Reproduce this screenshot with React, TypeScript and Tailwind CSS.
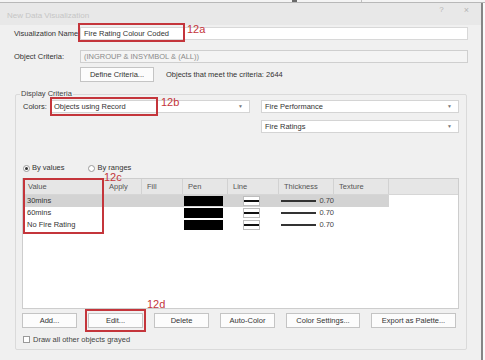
// New Data Visualization dialog, with the red numbered call-outs from the manual.

import React from "react";

const font = "font-['Liberation_Sans',Arial,sans-serif]";

type Row = { value: string; selected?: boolean };

const rows: Row[] = [
  { value: "30mins", selected: true },
  { value: "60mins" },
  { value: "No Fire Rating" },
];

const columns = [
  { label: "Value", w: "w-[81px]" },
  { label: "Apply", w: "w-[38px]" },
  { label: "Fill", w: "w-[41px]" },
  { label: "Pen", w: "w-[45px]" },
  { label: "Line", w: "w-[51px]" },
  { label: "Thickness", w: "w-[55px]" },
  { label: "Texture", w: "w-[55px]" },
];

function Select({ text, className }: { text: string; className: string }) {
  return (
    <div
      className={`h-[13px] bg-white border border-[#d4d4d4] flex items-center pl-[3px] pr-[6px] ${className}`}
    >
      <span className="flex-1 text-[#333]">{text}</span>
      <span className="text-[5px] text-[#777]">▼</span>
    </div>
  );
}

function Button({ label, w }: { label: string; w: string }) {
  return (
    <div
      className={`h-[15px] ${w} bg-[#fcfcfc] border border-[#c4c4c4] flex items-center justify-center text-[#333]`}
    >
      {label}
    </div>
  );
}

export default function App() {
  return (
    <div
      className={`relative w-[485px] h-[360px] overflow-hidden bg-[#f8f8f8] flex flex-col text-[7.5px] leading-none ${font}`}
    >
      {/* strip of the window behind the dialog */}
      <div className="h-[3px] flex border-b border-[#b8b8b8] bg-[#f4f4f4]">
        <div className="w-[292px]" />
        <div className="w-[5px] bg-[#6a6a6a]" />
        <div className="w-[65px] border-r border-[#c0c0c0]" />
      </div>

      <div className="flex flex-1">
        <div className="w-[483px] border-r-2 border-[#858585] bg-[#f0f0f0] flex flex-col">
          {/* title bar */}
          <div className="h-[22px] bg-[#e8e8e8] flex items-center pl-[7px] pr-[12px]">
            <span className="text-[8px] text-[#c6c6c6] pt-[4px]">New Data Visualization</span>
            <span className="ml-auto text-[8px] text-[#b5b5b5] -mt-[8px]">?</span>
            <span className="ml-[20px] text-[9px] text-[#b5b5b5] -mt-[8px]">×</span>
          </div>

          {/* name */}
          <div className="mt-[2px] h-[13px] flex items-center pl-[14px]">
            <span className="w-[66px] text-[#333]">Visualization Name</span>
            <div className="w-[388px] h-[13px] bg-white border border-[#d8d8d8] flex items-center pl-[3px] text-[#333]">
              Fire Rating Colour Coded
            </div>
          </div>

          {/* criteria */}
          <div className="mt-[10px] h-[13px] flex items-center pl-[14px]">
            <span className="w-[66px] text-[#333]">Object Criteria:</span>
            <div className="w-[388px] h-[13px] bg-[#f4f4f4] border border-[#cfcfcf] flex items-center pl-[3px] text-[#8a8a8a]">
              (INGROUP &amp; INSYMBOL &amp; (ALL))
            </div>
          </div>

          <div className="mt-[4px] h-[15px] flex items-center pl-[80px]">
            <Button label="Define Criteria..." w="w-[74px]" />
            <span className="ml-[12px] text-[#333]">Objects that meet the criteria: 2644</span>
          </div>

          {/* display criteria group */}
          <div className="relative mt-[12px] ml-[15px] w-[452px] h-[256px] border border-[#dadada] rounded-[2px] flex flex-col">
            <span className="absolute -top-[5px] left-[4px] px-[1px] bg-[#f0f0f0] text-[#444]">
              Display Criteria
            </span>

            <div className="mt-[5px] flex items-center pl-[7px]">
              <span className="w-[27px] text-[#333]">Colors:</span>
              <Select text="Objects using Record" className="w-[200px]" />
              <Select text="Fire Performance" className="ml-[11px] w-[198px]" />
            </div>
            <Select text="Fire Ratings" className="mt-[7px] ml-[245px] w-[198px]" />

            {/* radios */}
            <div className="mt-[30px] h-[10px] flex items-center pl-[7px] text-[#333]">
              <span className="w-[7px] h-[7px] rounded-full border border-[#9a9a9a] bg-white flex items-center justify-center">
                <span className="w-[3px] h-[3px] rounded-full bg-[#333]" />
              </span>
              <span className="ml-[2px]">By values</span>
              <span className="ml-[23px] w-[7px] h-[7px] rounded-full border border-[#9a9a9a] bg-white" />
              <span className="ml-[3px]">By ranges</span>
            </div>

            {/* records table */}
            <div className="mt-[5px] ml-[6px] w-[437px] h-[131px] bg-white border border-[#cdcdcd] flex flex-col">
              <div className="h-[16px] bg-[#e6e6e6] border-b border-[#d6d6d6] flex">
                {columns.map((c) => (
                  <div
                    key={c.label}
                    className={`${c.w} border-r border-[#d2d2d2] flex items-center pl-[5px] text-[#555]`}
                  >
                    {c.label}
                  </div>
                ))}
              </div>
              {rows.map((r) => (
                <div key={r.value} className="h-[12px] flex">
                  <div className={`w-[366px] flex items-center ${r.selected ? "bg-[#d3d3d3]" : ""}`}>
                    <div className="w-[81px] pl-[4px] text-[#333]">{r.value}</div>
                    <div className="w-[38px]" />
                    <div className="w-[41px]" />
                    <div className="w-[45px] h-full flex items-center pl-[1px]">
                      <div className="w-[39px] h-[10px] bg-black" />
                    </div>
                    <div className="w-[51px] h-full flex items-center pl-[15px]">
                      <div className="w-[17px] h-[10px] bg-white border border-[#bdbdbd] flex items-center">
                        <div className="w-full h-[2px] bg-[#111]" />
                      </div>
                    </div>
                    <div className="w-[55px] flex items-center pl-[2px] text-[#444]">
                      <div className="w-[36px] h-[1.5px] bg-[#333]" />
                      <span className="ml-[3px]">0.70</span>
                    </div>
                    <div className="w-[55px]" />
                  </div>
                </div>
              ))}
            </div>

            {/* buttons */}
            <div className="mt-[4px] ml-[6px] flex gap-[11px]">
              <Button label="Add..." w="w-[55px]" />
              <Button label="Edit..." w="w-[55px]" />
              <Button label="Delete" w="w-[55px]" />
              <Button label="Auto-Color" w="w-[55px]" />
              <Button label="Color Settings..." w="w-[74px]" />
              <Button label="Export as Palette..." w="w-[85px]" />
            </div>

            <div className="mt-[8px] ml-[7px] flex items-center text-[#444]">
              <span className="w-[7px] h-[7px] bg-white border border-[#9a9a9a]" />
              <span className="ml-[3px]">Draw all other objects grayed</span>
            </div>
          </div>
        </div>
        <div className="flex-1 bg-[#fafafa]" />
      </div>

      {/* manual call-outs */}
      <div className="absolute left-[78px] top-[23px] w-[107px] h-[19px] border-2 border-[#c4353b]" />
      <span className="absolute left-[187px] top-[24px] text-[11px] leading-none text-[#c4353b]">12a</span>
      <div className="absolute left-[50px] top-[97px] w-[108px] h-[19px] border-2 border-[#c4353b]" />
      <span className="absolute left-[161px] top-[97px] text-[11px] leading-none text-[#c4353b]">12b</span>
      <div className="absolute left-[23px] top-[178px] w-[81px] h-[56px] border-2 border-[#c4353b]" />
      <span className="absolute left-[104px] top-[172px] text-[11px] leading-none text-[#c4353b]">12c</span>
      <div className="absolute left-[85px] top-[309px] w-[61px] h-[23px] border-2 border-[#c4353b]" />
      <span className="absolute left-[147px] top-[299px] text-[11px] leading-none text-[#c4353b]">12d</span>
    </div>
  );
}
